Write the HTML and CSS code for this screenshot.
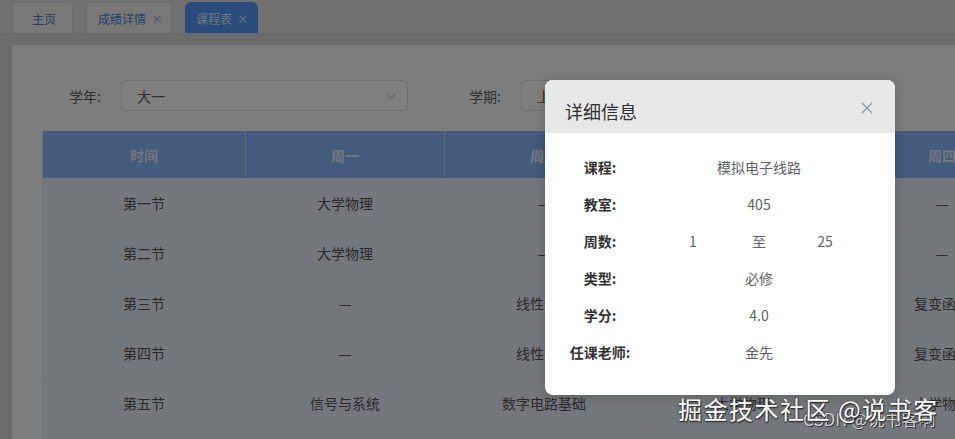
FILE: index.html
```html
<!DOCTYPE html>
<html lang="zh-CN">
<head>
  <meta charset="UTF-8">
  <meta name="viewport" content="width=device-width, initial-scale=1">
  <title>课程表</title>
  <link rel="stylesheet" href="styles.css">
</head>
<body>

  <!-- Tabs -->
  <div class="tabs">
    <div class="tab home">主页</div>
    <div class="tab"><span>成绩详情</span><span class="tab-close">×</span></div>
    <div class="tab active"><span>课程表</span><span class="tab-close">×</span></div>
  </div>

  <div class="main">
    <div class="card">

      <!-- Filter form -->
      <div class="filter">
        <div class="form-item">
          <label class="form-label">学年:</label>
          <div class="select">
            <span>大一</span>
            <svg class="chevron" viewBox="0 0 12 12" width="12" height="12"><path d="M2 4.5 L6 8.5 L10 4.5" fill="none" stroke="#c0c4cc" stroke-width="1.2"/></svg>
          </div>
        </div>
        <div class="form-item second">
          <label class="form-label">学期:</label>
          <div class="select">
            <span>上学期</span>
            <svg class="chevron" viewBox="0 0 12 12" width="12" height="12"><path d="M2 4.5 L6 8.5 L10 4.5" fill="none" stroke="#c0c4cc" stroke-width="1.2"/></svg>
          </div>
        </div>
      </div>

      <!-- Timetable -->
      <table class="timetable">
        <colgroup>
          <col class="col-time">
          <col><col><col><col><col><col>
        </colgroup>
        <thead>
          <tr>
            <th>时间</th>
            <th>周一</th>
            <th>周二</th>
            <th>周三</th>
            <th>周四</th>
            <th>周五</th>
            <th>周六</th>
          </tr>
        </thead>
        <tbody>
          <tr><td>第一节</td><td>大学物理</td><td>—</td><td>—</td><td>—</td><td>—</td><td>—</td></tr>
          <tr><td>第二节</td><td>大学物理</td><td>—</td><td>—</td><td>—</td><td>—</td><td>—</td></tr>
          <tr><td>第三节</td><td>—</td><td>线性代数</td><td>—</td><td>复变函数</td><td>—</td><td>—</td></tr>
          <tr><td>第四节</td><td>—</td><td>线性代数</td><td>—</td><td>复变函数</td><td>—</td><td>—</td></tr>
          <tr><td>第五节</td><td>信号与系统</td><td>数字电路基础</td><td>大学物理</td><td>大学物理</td><td>—</td><td>—</td></tr>
          <tr><td>第六节</td><td>信号与系统</td><td>数字电路基础</td><td>大学物理</td><td>大学物理</td><td>—</td><td>—</td></tr>
        </tbody>
      </table>

    </div>
  </div>

  <!-- Modal -->
  <div class="mask"></div>
  <div class="dialog">
    <div class="dialog-header">
      <span class="dialog-title">详细信息</span>
      <svg class="dialog-close" viewBox="0 0 12 12" width="12" height="12"><path d="M1 1 L11 11 M11 1 L1 11" stroke="#909399" stroke-width="1.2"/></svg>
    </div>
    <div class="dialog-body">
      <div class="info-row"><span class="info-label">课程:</span><span class="info-value">模拟电子线路</span></div>
      <div class="info-row"><span class="info-label">教室:</span><span class="info-value">405</span></div>
      <div class="info-row">
        <span class="info-label">周数:</span>
        <span class="info-value weeks"><span>1</span><span>至</span><span>25</span></span>
      </div>
      <div class="info-row"><span class="info-label">类型:</span><span class="info-value">必修</span></div>
      <div class="info-row"><span class="info-label">学分:</span><span class="info-value">4.0</span></div>
      <div class="info-row"><span class="info-label">任课老师:</span><span class="info-value">金先</span></div>
    </div>
  </div>

  <!-- Watermarks -->
  <div class="watermark-csdn">CSDN @说书客啊</div>
  <div class="watermark">掘金技术社区 @说书客</div>

</body>
</html>
```

FILE: styles.css
```css
html, body {
  margin: 0;
  padding: 0;
  overflow: hidden;
}

body {
  width: 955px;
  height: 439px;
  position: relative;
  font-family: "Noto Sans CJK SC", "Liberation Sans", sans-serif;
  font-size: 14px;
  color: #606266;
  background: #dcdcdc;
}

/* Tabs */
.tabs {
  height: 33px;
  display: flex;
  align-items: flex-end;
  gap: 13px;
  padding-left: 12px;
  background: #e2e2e2;
  box-sizing: border-box;
}

.tab {
  height: 31px;
  padding: 0 8px 0 11px;
  display: flex;
  align-items: center;
  gap: 5px;
  border: 1px solid #d8d8d8;
  border-bottom: none;
  border-radius: 4px 4px 0 0;
  background: #f0f0f0;
  color: #4a7ed0;
  font-size: 12px;
  box-sizing: border-box;
}

.tab.home {
  width: 61px;
  justify-content: center;
}

.tab.active {
  background: #5199f6;
  border-color: #5199f6;
  border-radius: 6px 6px 0 0;
  color: #e0ebfa;
  padding: 0 8px 0 10px;
}

.tab-close {
  font-size: 12px;
  color: #9aa6b8;
}

.tab.active .tab-close {
  color: #e0ebfa;
}

/* Main area */
.main {
  padding: 11px 0 0 12px;
  background: #d6d6d6;
  border-top: 1px solid #cfcfcf;
}

.card {
  background: #fbfbfb;
  padding: 35px 0 0 30px;
  width: 1600px;
  height: 420px;
  box-sizing: border-box;
}

/* Filter form */
.filter {
  display: flex;
  align-items: center;
}

.form-item {
  display: flex;
  align-items: center;
}

.form-item.second {
  margin-left: 34px;
}

.form-label {
  width: 79px;
  padding-right: 20px;
  box-sizing: border-box;
  text-align: right;
  color: #606266;
}

.select {
  width: 287px;
  height: 31px;
  border: 1px solid #dcdfe6;
  border-radius: 4px;
  background: #fff;
  box-sizing: border-box;
  display: flex;
  align-items: center;
  justify-content: space-between;
  padding: 0 10px 0 15px;
  color: #606266;
}

/* Timetable */
.timetable {
  margin-top: 20px;
  border-collapse: collapse;
  table-layout: fixed;
  width: 1397px;
  border-left: 1px solid #e4e8ee;
}

.timetable col {
  width: 199px;
}

.timetable col.col-time {
  width: 203px;
}

.timetable th,
.timetable td {
  text-align: center;
  padding: 0;
  white-space: nowrap;
}

.timetable th {
  height: 47px;
  background: #88b7fc;
  color: #e6eefb;
  font-weight: bold;
  border-right: 1px solid #c8d8ee;
}

.timetable td {
  height: 49px;
  background: #e9eef7;
  color: #555;
  border-right: 1px solid #e4e9f2;
  border-bottom: 1px solid #e4e9f2;
}

/* Modal */
.mask {
  position: absolute;
  inset: 0;
  background: rgba(0, 0, 0, 0.5);
}

.dialog {
  position: absolute;
  left: 545px;
  top: 80px;
  width: 350px;
  height: 315px;
  background: #fff;
  border-radius: 8px;
  overflow: hidden;
  box-shadow: 0 2px 12px rgba(0, 0, 0, 0.2);
}

.dialog-header {
  height: 53px;
  background: #e8e8e8;
  display: flex;
  align-items: center;
  justify-content: space-between;
  padding: 9px 22px 0 20px;
  box-sizing: border-box;
}

.dialog-title {
  font-size: 18px;
  color: #303133;
}

.dialog-close {
  margin-top: -6px;
}

.dialog-body {
  padding: 15px 0 0 20px;
}

.info-row {
  display: grid;
  grid-template-columns: 70px 248px;
  height: 37px;
  align-items: center;
}

.info-label {
  text-align: center;
  font-weight: bold;
  color: #333;
  white-space: nowrap;
}

.info-value {
  text-align: center;
  color: #606266;
}

.info-value.weeks {
  display: flex;
  justify-content: center;
}

.weeks span {
  width: 66px;
  text-align: center;
}

/* Watermarks */
.watermark {
  position: absolute;
  left: 678px;
  top: 391px;
  font-size: 24px;
  letter-spacing: 1.5px;
  color: #fff;
  text-shadow: 1px 1px 0 #333, -1px 0 0 #555, 0 1px 2px #222;
  white-space: nowrap;
}

.watermark-csdn {
  position: absolute;
  left: 803px;
  top: 406px;
  font-size: 17px;
  color: rgba(235, 235, 235, 0.85);
  text-shadow: 1px 1px 0 #333, -1px -1px 0 #555;
  white-space: nowrap;
}
```
